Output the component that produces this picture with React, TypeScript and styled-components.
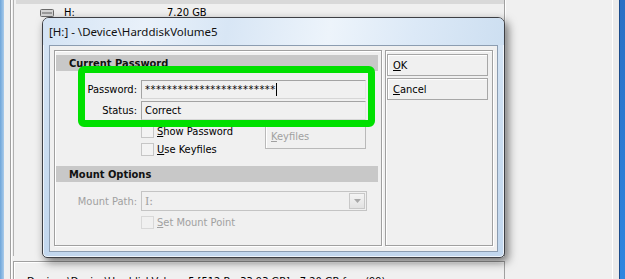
import React from "react";
import styled, { createGlobalStyle } from "styled-components";

const UI = `"DejaVu Sans Condensed", "DejaVu Sans", sans-serif`;
const TITLE = `"Noto Sans", "Open Sans", sans-serif`;

const Global = createGlobalStyle`
  html, body { margin: 0; padding: 0; background: #f0f0f0; overflow: hidden; }
  body { font-family: ${UI}; font-size: 11px; color: #000; }
  #root { width: 625px; height: 279px; }
`;

const Screen = styled.div`
  position: relative;
  width: 625px;
  height: 279px;
  overflow: hidden;
  display: flex;
  background: #f0f0f0;
`;

const FrameLeft = styled.div`
  width: 4px;
  flex: none;
  background: linear-gradient(90deg, #6ea5d9, #a9cbeb);
`;

const MainCol = styled.div`
  margin-left: 6px;
  width: 494px;
  flex: none;
  display: flex;
  flex-direction: column;
  border-left: 1px solid #a0a0a0;
  box-shadow: inset 1px 0 0 #fff;
`;

const List = styled.div`
  margin-left: 2px;
  height: 256px;
  flex: none;
  border-left: 1px solid #b0b0b0;
  border-right: 1px solid #a0a0a0;
  box-shadow: 1px 0 0 #fff;
  display: flex;
  flex-direction: column;
  overflow: hidden;
`;

const Row = styled.div<{ $sel?: boolean; $cut?: boolean }>`
  height: 17px;
  flex: none;
  display: flex;
  align-items: center;
  margin-top: ${(p) => (p.$cut ? "-13px" : "0")};
  margin-left: 2px;
  background: ${(p) => (p.$sel ? "#d9d9d9" : "transparent")};
  color: #000;
  white-space: nowrap;
`;

const IconCell = styled.div`
  width: 24px;
  padding-left: 24px;
  display: flex;
  align-items: center;
`;

const NameCell = styled.div`
  width: 103px;
`;

const SizeCell = styled.div``;

const BottomPanel = styled.div`
  margin-left: 2px;
  margin-top: 5px;
  flex: 1;
  min-height: 0;
  border-top: 1px solid #a0a0a0;
  border-left: 1px solid #a0a0a0;
  border-right: 1px solid #a0a0a0;
  box-shadow: inset 1px 1px 0 #fff;
  padding: 13px 0 0 13px;
  white-space: nowrap;
  overflow: hidden;
`;

const RightArea = styled.div`
  flex: 1;
`;

const FrameRight = styled.div`
  width: 13px;
  flex: none;
  display: flex;
`;

const EdgeWhite = styled.div`
  width: 1px;
  background: #ffffff;
`;
const EdgeGrey = styled.div`
  width: 6px;
  background: #ebebeb;
`;
const EdgeBlue = styled.div`
  flex: 1;
  border-left: 1px solid #1a4c8c;
  background: linear-gradient(180deg, #2a6fc4, #2f86e0);
`;

/* ---------- dialog ---------- */

const Dialog = styled.div`
  position: absolute;
  left: 42px;
  top: 17px;
  width: 463px;
  height: 241px;
  box-sizing: border-box;
  border: 1px solid #3d3f44;
  border-radius: 7px 7px 5px 5px;
  background: linear-gradient(180deg, #d6e5f5 0%, #c9dcf0 60%, #c2d7ee 100%);
  box-shadow: 3px 4px 10px rgba(0, 0, 0, 0.55), inset 0 0 0 1px rgba(255, 255, 255, 0.7);
  display: flex;
  flex-direction: column;
  padding: 0 6px 5px 6px;
`;

const TitleBar = styled.div`
  height: 27px;
  flex: none;
  display: flex;
  align-items: center;
  font-family: ${TITLE};
  font-size: 11.5px;
  color: #111;
  margin: 0 -6px;
  padding-left: 6px;
  border-radius: 6px 6px 0 0;
  background: linear-gradient(100deg, #d3e3f4 0%, #e9f1fa 22%, #d8e6f5 40%, #edf4fb 62%, #dce9f7 80%, #cddff1 100%);
`;

const Client = styled.div`
  flex: 1;
  background: #f0f0f0;
  border: 1px solid #8c9db1;
  display: flex;
  gap: 3px;
  padding: 4px 4px 5px 4px;
`;

const GroupBox = styled.div<{ $w: number }>`
  width: ${(p) => p.$w}px;
  flex: none;
  box-sizing: border-box;
  border: 1px solid #a0a0a0;
  box-shadow: inset 1px 1px 0 #fff, 1px 1px 0 #fff;
  display: flex;
  flex-direction: column;
`;

const LeftGroup = styled(GroupBox)`
  padding: 4px 3px 0 1px;
`;

const RightGroup = styled(GroupBox)`
  padding: 3px 3px 0 1px;
  gap: 2px;
`;

const SectionHeader = styled.div<{ $mt?: number }>`
  height: 16px;
  flex: none;
  margin-top: ${(p) => p.$mt ?? 0}px;
  background: #c8c8c8;
  font-weight: bold;
  color: #111;
  padding-left: 13px;
  display: flex;
  align-items: center;
`;

const FormGrid = styled.div<{ $mt: number }>`
  display: grid;
  grid-template-columns: 81px 225px;
  column-gap: 4px;
  row-gap: 2px;
  margin-top: ${(p) => p.$mt}px;
  align-items: center;
`;

const Label = styled.div<{ $disabled?: boolean }>`
  text-align: right;
  color: ${(p) => (p.$disabled ? "#a0a0a0" : "#000")};
`;

const Field = styled.div`
  height: 19px;
  box-sizing: border-box;
  border: 1px solid;
  border-color: #a3a3a3 #e6e6e6 #d6d6d6 #a3a3a3;
  background: #f0f0f0;
  display: flex;
  align-items: center;
  padding-left: 3px;
  white-space: nowrap;
`;

const Masked = styled.span`
  letter-spacing: 0.5px;
`;

const Caret = styled.span`
  display: inline-block;
  width: 1px;
  height: 13px;
  background: #000;
`;

const OptionsArea = styled.div`
  display: flex;
  margin-top: 4px;
  padding-left: 85px;
`;

const CheckCol = styled.div`
  display: flex;
  flex-direction: column;
  gap: 5px;
  padding-top: 1px;
  width: 124px;
`;

const CheckRow = styled.div<{ $disabled?: boolean }>`
  display: flex;
  align-items: center;
  gap: 3px;
  height: 13px;
  color: ${(p) => (p.$disabled ? "#a0a0a0" : "#000")};
`;

const Box = styled.div<{ $disabled?: boolean }>`
  width: 13px;
  height: 13px;
  box-sizing: border-box;
  border: 1px solid ${(p) => (p.$disabled ? "#d8d8d8" : "#c6c6c6")};
  background: ${(p) => (p.$disabled ? "#f0f0f0" : "#f3f3f3")};
`;

const Button = styled.div<{ $disabled?: boolean; $w?: number }>`
  width: ${(p) => p.$w ?? 101}px;
  height: 22px;
  box-sizing: border-box;
  border: 1px solid #a7a7a7;
  box-shadow: inset 1px 1px 0 #fff;
  background: #f0f0f0;
  display: flex;
  align-items: center;
  padding-left: 5px;
  color: ${(p) => (p.$disabled ? "#a0a0a0" : "#000")};
`;

const KeyfilesButton = styled(Button)`
  height: 25px;
  border-color: #b9b9b9;
`;

const Combo = styled.div`
  height: 20px;
  box-sizing: border-box;
  border: 1px solid #c4c4c4;
  background: #f0f0f0;
  display: flex;
  align-items: center;
  justify-content: space-between;
  padding-left: 3px;
  padding-right: 1px;
  color: #a0a0a0;
  width: 226px;
`;

const ComboText = styled.span`
  font-family: "DejaVu Serif", serif;
  font-size: 11px;
`;

const DropBtn = styled.div`
  width: 16px;
  height: 16px;
  box-sizing: border-box;
  border: 1px solid #c8c8c8;
  background: linear-gradient(180deg, #f4f4f4, #e2e2e2);
  display: flex;
  align-items: center;
  justify-content: center;
`;

const MountCheck = styled.div`
  padding-left: 85px;
  margin-top: 5px;
`;

const Annotation = styled.div`
  position: absolute;
  left: 78px;
  top: 66px;
  width: 297px;
  height: 61px;
  box-sizing: border-box;
  border: 7px solid #00e000;
  border-radius: 6px;
  pointer-events: none;
`;

const DriveIcon = () => (
  <svg width="14" height="8" viewBox="0 0 14 8">
    <rect x="0.5" y="0.5" width="13" height="7" rx="1" fill="#d4d4d4" stroke="#6a6a6a" />
    <rect x="2" y="3" width="10" height="2" fill="#9a9a9a" />
  </svg>
);

const Arrow = () => (
  <svg width="7" height="4" viewBox="0 0 7 4">
    <path d="M0 0 L7 0 L3.5 4 Z" fill="#a8a8a8" />
  </svg>
);

export default function App() {
  return (
    <>
      <Global />
      <Screen>
        <FrameLeft />
        <MainCol>
          <List>
            <Row $sel $cut>
              <IconCell />
              <NameCell>\Device\Harddisk1\Partition1</NameCell>
            </Row>
            <Row>
              <IconCell>
                <DriveIcon />
              </IconCell>
              <NameCell>H:</NameCell>
              <SizeCell>7.20 GB</SizeCell>
            </Row>
          </List>
          <BottomPanel>Device: \Device\HarddiskVolume5 [512 B - 33.93 GB] - 7.20 GB free (99)</BottomPanel>
        </MainCol>
        <RightArea />
        <FrameRight>
          <EdgeWhite />
          <EdgeGrey />
          <EdgeBlue />
        </FrameRight>

        <Dialog>
          <TitleBar>[H:] - \Device\HarddiskVolume5</TitleBar>
          <Client>
            <LeftGroup $w={328}>
              <SectionHeader>Current Password</SectionHeader>
              <FormGrid $mt={9}>
                <Label>Password:</Label>
                <Field>
                  <Masked>************************</Masked>
                  <Caret />
                </Field>
                <Label>Status:</Label>
                <Field>Correct</Field>
              </FormGrid>
              <OptionsArea>
                <CheckCol>
                  <CheckRow>
                    <Box />
                    <span>
                      <u>S</u>how Password
                    </span>
                  </CheckRow>
                  <CheckRow>
                    <Box />
                    <span>
                      <u>U</u>se Keyfiles
                    </span>
                  </CheckRow>
                </CheckCol>
                <KeyfilesButton $disabled>
                  <span>
                    <u>K</u>eyfiles
                  </span>
                </KeyfilesButton>
              </OptionsArea>
              <SectionHeader $mt={10}>Mount Options</SectionHeader>
              <FormGrid $mt={9}>
                <Label $disabled>Mount Path:</Label>
                <Combo>
                  <ComboText>I:</ComboText>
                  <DropBtn>
                    <Arrow />
                  </DropBtn>
                </Combo>
              </FormGrid>
              <MountCheck>
                <CheckRow $disabled>
                  <Box $disabled />
                  <span>
                    <u>S</u>et Mount Point
                  </span>
                </CheckRow>
              </MountCheck>
            </LeftGroup>
            <RightGroup $w={108}>
              <Button>
                <span>
                  <u>O</u>K
                </span>
              </Button>
              <Button>
                <span>
                  <u>C</u>ancel
                </span>
              </Button>
            </RightGroup>
          </Client>
        </Dialog>
        <Annotation />
      </Screen>
    </>
  );
}
